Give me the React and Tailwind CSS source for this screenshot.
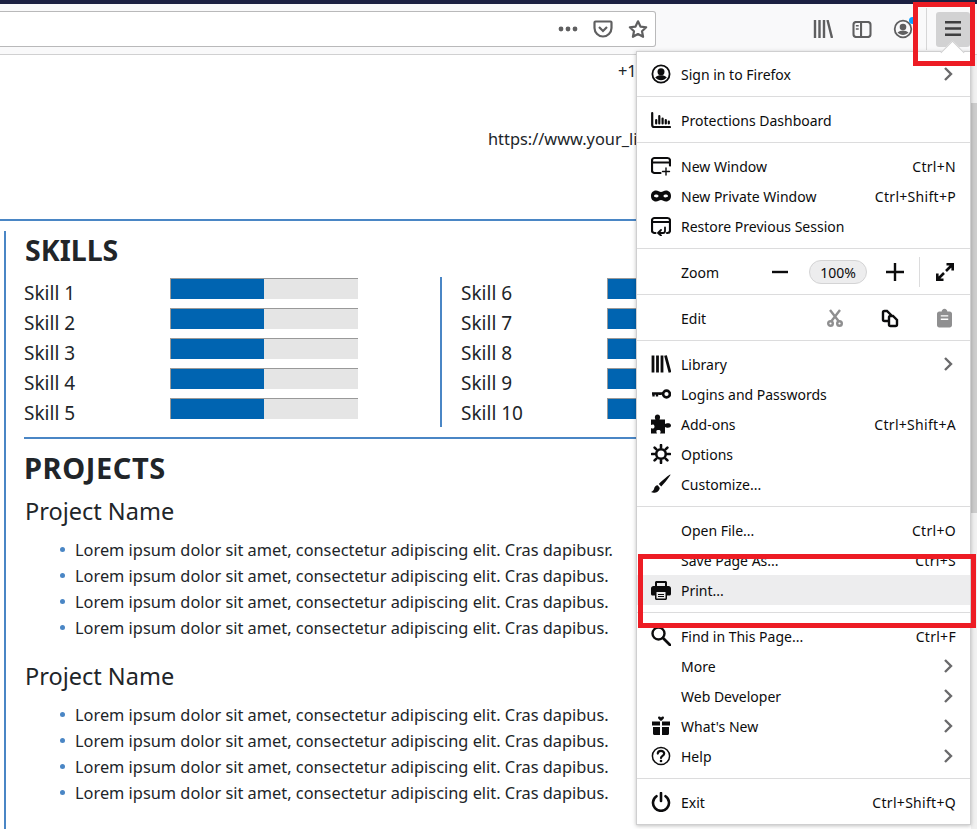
import React from 'react';

const SANS = "font-['Noto_Sans',sans-serif]";
const LOREM = 'Lorem ipsum dolor sit amet, consectetur adipiscing elit. Cras dapibus.';

const Icon = ({ children, fill = 'none', stroke = '#0c0c0d', sw = 2 }) => (
  <svg width="20" height="20" viewBox="0 0 20 20" fill={fill} stroke={stroke} strokeWidth={sw} strokeLinecap="round" strokeLinejoin="round">
    {children}
  </svg>
);

const icons = {
  account: (
    <Icon sw={1.8}>
      <circle cx="10" cy="10" r="8.600" />
      <circle cx="10" cy="7.800" r="3.500" fill="#0c0c0d" stroke="none" />
      <path d="M4.200 13.600c1.500-1.700 3.700-2.300 5.800-2.300s4.300.6 5.800 2.300c-1.300 1.600-3.500 2.700-5.800 2.700s-4.500-1.100-5.800-2.700z" fill="#0c0c0d" stroke="none" />
    </Icon>
  ),
  shield: (
    <Icon sw={2.200}>
      <path d="M1.200 3v12c0 1.300.7 2 2 2H19" />
      <path d="M5.200 13.500V10M8.300 13.500V6M11.600 13.500V8.500M14.800 13.500V10M17.800 13.500v-2" />
    </Icon>
  ),
  newWindow: (
    <Icon sw={2.200}>
      <path d="M9.500 17H3.500C2.200 17 1 16 1 14.500v-10C1 3 2.200 2 3.500 2h13C18 2 19 3 19 4.500V9.500" />
      <path d="M1.500 6.500h17" />
      <path d="M15 12v7M11.500 15.500h7" strokeWidth="1.400" />
    </Icon>
  ),
  mask: (
    <Icon fill="#0c0c0d" stroke="none">
      <path fillRule="evenodd" d="M5 4.500c2 0 3.500 1.500 5 1.500s3-1.500 5-1.500c3 0 5 2.300 5 5.500s-2 5.500-5 5.500c-2 0-3.500-1.500-5-1.500s-3 1.500-5 1.500c-3 0-5-2.300-5-5.500s2-5.500 5-5.500zm.7 4.100c-1.200 0-2.700.4-2.700 1.400s1.500 1.400 2.700 1.400 1.800-.8 1.800-1.400-.6-1.400-1.800-1.400zm8.600 0c-1.200 0-1.800.8-1.800 1.400s.6 1.400 1.800 1.400 2.700-.4 2.700-1.400-1.500-1.400-2.700-1.400z" />
    </Icon>
  ),
  restore: (
    <Icon sw={2.200}>
      <path d="M4.500 17H3.500C2.200 17 1 16 1 14.500v-10C1 3 2.200 2 3.500 2h13C18 2 19 3 19 4.500v10c0 1.500-1 2.500-2.500 2.500H16" />
      <path d="M1.500 6h17" />
      <path d="M14 11.500v3.500c0 1-.6 2-2 2H7.500M10 14l-3 3 3 2.500" strokeWidth="1.800" />
    </Icon>
  ),
  library: (
    <Icon stroke="#0c0c0d" sw={2.800}>
      <path d="M2 1.500v17M6.500 1.500v17M11 1.500v17M14.500 1.500l4.500 17" strokeLinecap="butt" />
    </Icon>
  ),
  key: (
    <Icon>
      <circle cx="15.500" cy="10" r="3.400" strokeWidth="2.600" />
      <path d="M12 9.500H1M2.500 9.500v3M6 9.500v3M9 9.500v1.500" strokeWidth="2.400" strokeLinecap="butt" />
    </Icon>
  ),
  puzzle: (
    <Icon fill="#0c0c0d" stroke="none">
      <path d="M0 5.500h4.500C3.500 4 3.500.5 6.500.5S9.500 4 8.500 5.500H14v4.500c1.500-1 6-1.300 6 1.500s-4.500 2.500-6 1.500v6.500H9c1-1.500 1-3.500-1.500-3.500S5 17 6 19.500H0v-5.500c1.500 1 3.500.8 3.500-1.500S1.500 10 0 11z" />
    </Icon>
  ),
  gear: (
    <Icon>
      <circle cx="10" cy="10" r="4.800" strokeWidth="2.600" />
      <path d="M10 1v2.500M10 16.500V19M1 10h2.500M16.500 10H19M3.600 3.600l1.800 1.800M14.600 14.600l1.800 1.800M3.600 16.400l1.800-1.800M14.600 5.400l1.800-1.800" strokeWidth="2.600" />
    </Icon>
  ),
  brush: (
    <Icon fill="#0c0c0d" stroke="none">
      <path d="M19.500.5c.5.5-5.500 8.500-9.300 12L7.800 10C11.300 6.300 19-.1 19.500.5z" />
      <path d="M6.800 11.200c-2.500 0-3.300 1.800-3.800 3.800-.4 1.300-1.500 2.500-3 3 2.500 1.500 7.800 1 8.800-4z" />
    </Icon>
  ),
  print: (
    <Icon fill="#0c0c0d" stroke="none">
      <path d="M4 7V2.500C4 1.500 4.800 1 5.500 1h9c.8 0 1.500.6 1.500 1.500V7h-2V3H6v4z" />
      <path fillRule="evenodd" d="M2.500 6h15C19 6 20 7 20 8.500V14c0 .8-.6 1.500-1.500 1.500H16v3c0 .8-.7 1.500-1.500 1.500h-9c-.8 0-1.500-.7-1.500-1.500v-3H1.500C.6 15.500 0 14.800 0 14V8.500C0 7 1 6 2.500 6zM5.500 12v6.500h9V12z" />
      <path d="M7 14h6v1H7zM7 16h6v1H7z" />
    </Icon>
  ),
  search: (
    <Icon sw={2.400}>
      <circle cx="7.500" cy="7.500" r="6" />
      <path d="M12 12l7 7" strokeWidth="2.800" />
    </Icon>
  ),
  gift: (
    <Icon fill="#0c0c0d" stroke="none">
      <path d="M1 5.500h8v4H1zM11 5.500h8v4h-8zM2 11h7v8H3.500C2.600 19 2 18.400 2 17.500zM11 11h7v6.500c0 .9-.6 1.500-1.500 1.500H11z" />
      <path d="M10 5C8.500 3.800 7 2.800 7 1.700 7 .6 8.800 0 10 1.500 11.200 0 13 .6 13 1.700 13 2.800 11.500 3.800 10 5z" />
    </Icon>
  ),
  help: (
    <Icon sw={1.500}>
      <circle cx="10" cy="10" r="8.600" />
      <path d="M6.800 7.600C6.800 5.800 8.200 4.800 10 4.800s3.200 1 3.200 2.700c0 2.400-3.200 2.400-3.200 4.500" strokeWidth="2.200" />
      <circle cx="10" cy="15" r="1.300" fill="#0c0c0d" stroke="none" />
    </Icon>
  ),
  power: (
    <Icon sw={2.600}>
      <path d="M5.500 4.200a8 8 0 1 0 9 0" />
      <path d="M10 1v8" />
    </Icon>
  ),
};

const Chevron = () => (
  <svg width="12" height="14" viewBox="0 0 12 14" fill="none" stroke="#6a6a6c" strokeWidth="2.400" className="absolute right-[16px]">
    <path d="M3 1 9 7l-6 6" />
  </svg>
);

const Row = ({ icon, label, keys, arrow, active }) => (
  <div className={`relative flex h-[30px] items-center pl-[14px] pr-[14px] text-[14px] text-[#0c0c0d] ${active ? 'bg-[#ededee]' : ''}`}>
    <span className="flex w-[30px] shrink-0 items-center">{icon && icons[icon]}</span>
    <span className="flex-1 whitespace-nowrap">{label}</span>
    {keys && <span className="whitespace-nowrap tracking-[0.3px]">{keys}</span>}
    {arrow && <Chevron />}
  </div>
);

const Sep = () => <div className="mt-[7px] mb-[8px] h-px bg-[#dcdcdd]" />;

function Menu() {
  return (
    <div className={`absolute left-[636px] top-[51px] h-[774px] w-[335px] border border-[#cfcfd0] bg-white py-[7px] shadow-[0_1px_4px_rgba(0,0,0,0.25)] ${SANS}`}>
      <Row icon="account" label="Sign in to Firefox" arrow />
      <Sep />
      <Row icon="shield" label="Protections Dashboard" />
      <Sep />
      <Row icon="newWindow" label="New Window" keys="Ctrl+N" />
      <Row icon="mask" label="New Private Window" keys="Ctrl+Shift+P" />
      <Row icon="restore" label="Restore Previous Session" />
      <Sep />
      <div className="flex h-[30px] items-center pl-[44px] text-[14px] text-[#0c0c0d]">
        <span className="w-[90px]">Zoom</span>
        <svg width="16" height="16" viewBox="0 0 16 16" className="ml-[1px]" stroke="#0c0c0d" strokeWidth="2.400"><path d="M0 8h16" /></svg>
        <span className="ml-[21px] flex h-[24px] w-[58px] items-center justify-center rounded-full border border-[#d4d4d5] bg-[#ededee] text-[14px]">100%</span>
        <svg width="18" height="18" viewBox="0 0 18 18" className="ml-[19px]" stroke="#0c0c0d" strokeWidth="2.400"><path d="M0 9h18M9 0v18" /></svg>
        <span className="ml-[15px] h-[30px] w-px bg-[#dcdcdd]" />
        <svg width="18" height="18" viewBox="0 0 18 18" className="ml-[16px]" fill="none" stroke="#0c0c0d" strokeWidth="2.600"><path d="M10.500 1.300h6.200v6.200M16.500 1.500 10 8M7.500 16.700H1.300v-6.200M1.500 16.500 8 10" /></svg>
      </div>
      <Sep />
      <div className="flex h-[30px] items-center pl-[44px] text-[14px] text-[#0c0c0d]">
        <span className="w-[146px]">Edit</span>
        <svg width="16" height="18" viewBox="0 0 16 18" fill="none" stroke="#8f8f90" strokeWidth="2.400"><path d="M3 1l8.500 11M13 1 4.500 12" /><circle cx="3.500" cy="14.500" r="2.300" /><circle cx="12.500" cy="14.500" r="2.300" /></svg>
        <svg width="18" height="19" viewBox="0 0 18 19" className="ml-[38px]" fill="none" stroke="#0c0c0d" strokeWidth="2.400"><path d="M7 12H3.500C2.500 12 2 11.400 2 10.500v-7C2 2.500 2.500 2 3.500 2H6l4 4v1" /><path d="M8 8.500C8 7.500 8.500 7 9.500 7H12l4 4v4.500c0 1-.5 1.500-1.500 1.500h-5C8.500 17 8 16.500 8 15.500z" /></svg>
        <svg width="15" height="20" viewBox="0 0 16 20" className="ml-[38px]" fill="#8f8f90"><path fillRule="evenodd" d="M5 3c0-1.500 1.300-3 3-3s3 1.500 3 3h2.500C15 3 16 4 16 5.500v12c0 1.500-1 2.500-2.500 2.500h-11C1 20 0 19 0 17.500v-12C0 4 1 3 2.500 3zM4 7v1.500h8V7zm0 3.500V12h8v-1.500z" /></svg>
      </div>
      <Sep />
      <Row icon="library" label="Library" arrow />
      <Row icon="key" label="Logins and Passwords" />
      <Row icon="puzzle" label="Add-ons" keys="Ctrl+Shift+A" />
      <Row icon="gear" label="Options" />
      <Row icon="brush" label="Customize..." />
      <Sep />
      <Row label="Open File..." keys="Ctrl+O" />
      <Row label="Save Page As..." keys="Ctrl+S" />
      <Row icon="print" label="Print..." active />
      <Sep />
      <Row icon="search" label="Find in This Page..." keys="Ctrl+F" />
      <Row label="More" arrow />
      <Row label="Web Developer" arrow />
      <Row icon="gift" label="What's New" arrow />
      <Row icon="help" label="Help" arrow />
      <Sep />
      <Row icon="power" label="Exit" keys="Ctrl+Shift+Q" />
    </div>
  );
}

function Toolbar() {
  return (
    <div className="flex h-[51px] items-start border-b border-[#d0d0d1] bg-[#f9f9fa] pt-[7px]">
      <div className="flex h-[36px] w-[656px] shrink-0 items-center justify-end gap-[15px] rounded-r-[3px] border border-l-0 border-[#b9b9ba] bg-white pr-[7px]">
        <svg width="20" height="6" viewBox="0 0 20 6" fill="#5f5f60"><circle cx="3" cy="3" r="2.400" /><circle cx="10" cy="3" r="2.400" /><circle cx="17" cy="3" r="2.400" /></svg>
        <svg width="20" height="18" viewBox="0 0 20 18" fill="none" stroke="#5f5f60" strokeWidth="2.200"><path d="M2.500 1.500h15c.6 0 1 .4 1 1V8c0 4.500-4 8.500-8.500 8.500S1.500 12.500 1.500 8V2.500c0-.6.4-1 1-1z" /><path d="m6 7 4 4 4-4" /></svg>
        <svg width="20" height="20" viewBox="0 0 22 21" fill="none" stroke="#5f5f60" strokeWidth="2.400" strokeLinejoin="round"><path d="m11 2 2.700 5.800 6.300.8-4.600 4.300 1.200 6.200-5.600-3.100-5.600 3.100 1.200-6.200L2 8.600l6.300-.8z" /></svg>
      </div>
      <div className="ml-[157px] mt-[8px] flex h-[20px] shrink-0 items-center">
        <svg width="20" height="18" viewBox="0 0 20 18" fill="none" stroke="#5f5f60" strokeWidth="2.400"><path d="M2 0v18M6.500 0v18M11 0v18M14.500 0l4.500 18" /></svg>
        <svg width="20" height="17" viewBox="0 0 20 18" className="ml-[19px]" fill="none" stroke="#5f5f60" strokeWidth="2.200"><rect x="1" y="1" width="18" height="16" rx="3" /><path d="M9 1v16" /><path d="M3.500 5H6.500M3.500 8.500H6.500" strokeWidth="1.500" /></svg>
        <div className="relative ml-[21px] h-[20px] w-[20px]">
          <svg width="20" height="20" viewBox="0 0 20 20" fill="none" stroke="#5f5f60" strokeWidth="1.800"><circle cx="10" cy="10" r="8.300" /><circle cx="10" cy="8" r="3.300" fill="#5f5f60" stroke="none" /><path d="M4.500 13.600c3-2.800 8-2.800 11 0-3 3.300-8 3.300-11 0z" fill="#5f5f60" stroke="none" /></svg>
          <span className="absolute right-[-3px] top-[-2px] h-[7px] w-[7px] rounded-full bg-[#0a9dff]" />
        </div>
      </div>
      <div className="ml-[13px] mt-[-3px] h-[42px] w-px shrink-0 bg-[#d6d6d7]" />
      <div className="ml-[9px] mt-[1px] flex h-[35px] w-[34px] shrink-0 items-center justify-center rounded-[3px] bg-[#d2d2d3]">
        <svg width="16" height="15" viewBox="0 0 16 15" className="-translate-y-px" stroke="#3f3f40" strokeWidth="2.400"><path d="M0 1.300h16M0 7.500h16M0 13.700h16" /></svg>
      </div>
    </div>
  );
}

const Bar = () => (
  <div className="h-[21px] w-[188px] border-t border-l border-[#999999] bg-[#e5e5e5]">
    <div className="h-full w-[93px] bg-[#0064b1]" />
  </div>
);

const SkillCol = ({ names, className }) => (
  <div className={`flex flex-col gap-[9px] ${className}`}>
    {names.map((n) => (
      <div key={n} className="flex h-[21px] items-center">
        <span className="w-[146px] translate-y-[5px] text-[19px]">{n}</span>
        <Bar />
      </div>
    ))}
  </div>
);

const Project = ({ items }) => (
  <div>
    <h3 className="pl-px text-[23.500px] leading-[32px]">Project Name</h3>
    <ul className="mt-[9.500px] pl-[36px] text-[16.350px] leading-[26px]">
      {items.map((t, i) => (
        <li key={i} className="flex items-center gap-[10px] whitespace-nowrap">
          <span className="h-[5px] w-[5px] shrink-0 rounded-full bg-[#4a86c5]" />
          {t}
        </li>
      ))}
    </ul>
  </div>
);

export default function App() {
  return (
    <div className={`relative h-[829px] w-[977px] overflow-hidden bg-white text-[#212529] ${SANS}`}>
      <div className="h-[4px] bg-[#1c2042]" />
      <Toolbar />

      {/* page */}
      <div className="h-[166px] border-b-2 border-[#4a86c5] pl-[618px] pt-[4px] text-[16.350px]">
        <div className="whitespace-nowrap">+1</div>
        <div className="-ml-[130px] mt-[43px] whitespace-nowrap">https://www.your_li</div>
      </div>
      <div className="ml-[4px] mt-[10px] border-l-2 border-[#4a86c5] pb-[100px] pl-[18px]">
        <h2 className="pl-px text-[28.500px] font-bold leading-[38px]">SKILLS</h2>
        <div className="mt-[9px] flex">
          <SkillCol className="w-[416px]" names={['Skill 1', 'Skill 2', 'Skill 3', 'Skill 4', 'Skill 5']} />
          <div className="h-[150px] w-[2px] -translate-y-[1px] bg-[#4a86c5]" />
          <SkillCol className="pl-[19px]" names={['Skill 6', 'Skill 7', 'Skill 8', 'Skill 9', 'Skill 10']} />
        </div>
        <div className="mt-[9px] h-[2px] bg-[#4a86c5]" />
        <h2 className="mt-[10px] text-[29px] font-bold leading-[38px] tracking-[0.6px]">PROJECTS</h2>
        <div className="mt-[8px] flex flex-col gap-[19.500px]">
          <Project items={[LOREM.replace('dapibus.', 'dapibusr.'), LOREM, LOREM, LOREM]} />
          <Project items={[LOREM, LOREM, LOREM, LOREM]} />
        </div>
      </div>

      {/* scrollbar */}
      <div className="absolute right-0 top-[55px] h-[774px] w-[6px] bg-[#f1f1f1]">
        <div className="mt-[48px] h-[410px] bg-[#cdcdcd]" />
      </div>

      {/* dropdown arrow */}
      <Menu />
      <div className="absolute left-[944px] top-[44px] z-10 h-[17px] w-[17px] rotate-45 border-l border-t border-[#cfcfd0] bg-white" />
      <div className="absolute left-[943px] top-[52px] z-10 h-[10px] w-[19px] bg-white" />

      {/* red callouts */}
      <div className="absolute left-[913px] top-[2px] z-20 h-[64px] w-[62px] border-[5px] border-[#ed1c24]" />
      <div className="absolute left-[638px] top-[554px] z-20 h-[74px] w-[338px] border-[5px] border-[#ed1c24]" />
    </div>
  );
}
